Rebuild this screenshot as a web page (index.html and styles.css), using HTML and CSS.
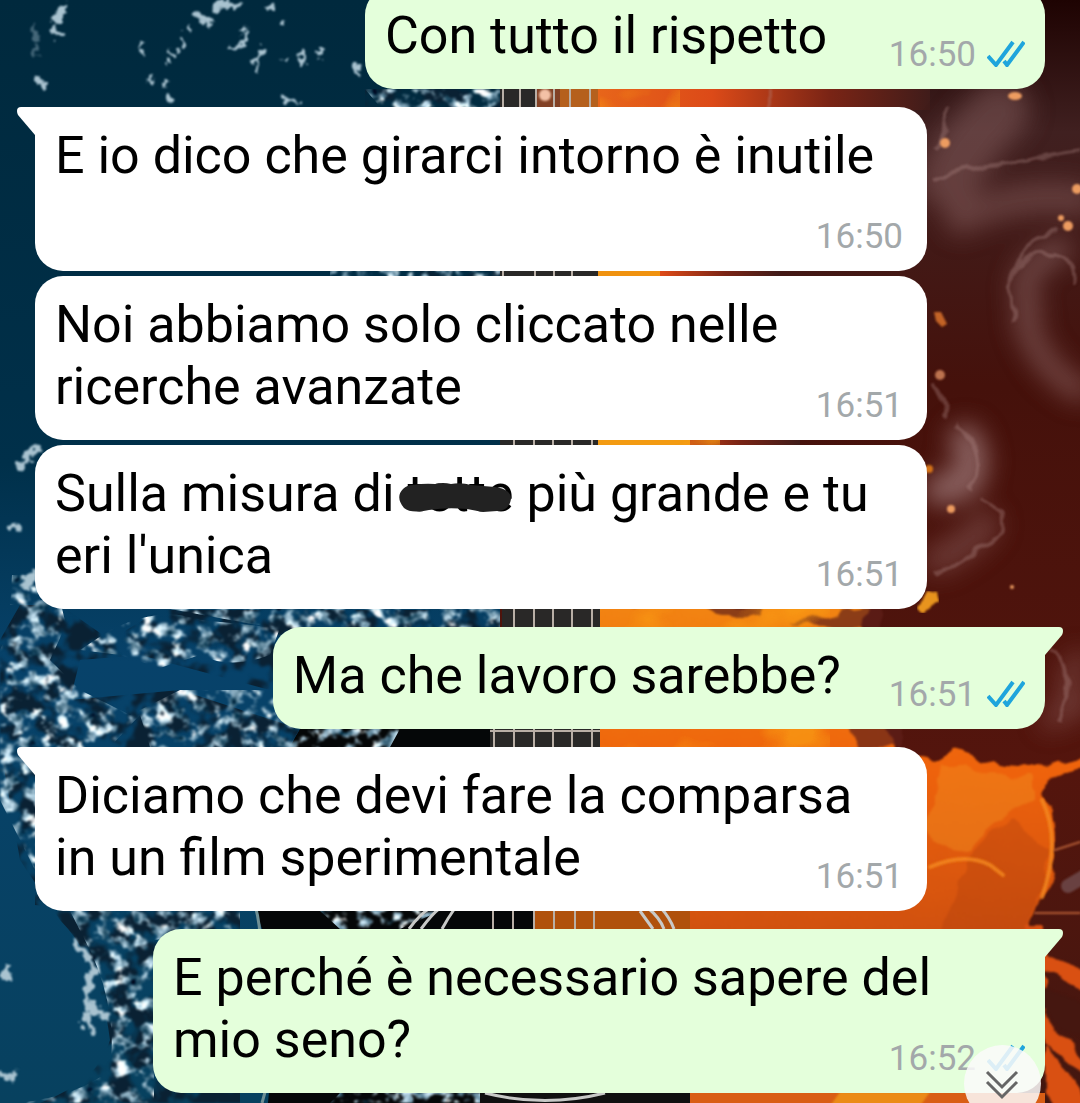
FILE: index.html
```html
<!DOCTYPE html>
<html lang="it">
<head>
    <meta charset="UTF-8">
    <meta name="viewport" content="width=device-width, initial-scale=1">
    <title>Chat</title>
    <link rel="stylesheet" href="styles.css">
</head>
<body>
    <!-- wallpaper: water and fire guitar -->
    <svg class="wallpaper" viewBox="0 0 1080 1103" preserveAspectRatio="xMidYMid slice" aria-hidden="true">
        <defs>
            <linearGradient id="water" x1="0" y1="0" x2="0" y2="1">
                <stop offset="0" stop-color="#00293d"/>
                <stop offset=".42" stop-color="#00304a"/>
                <stop offset=".6" stop-color="#07426a"/>
                <stop offset="1" stop-color="#07415f"/>
            </linearGradient>
            <linearGradient id="ember" x1="0" y1="0" x2="0" y2="1">
                <stop offset="0" stop-color="#1e0302"/>
                <stop offset=".12" stop-color="#402020"/>
                <stop offset=".35" stop-color="#45110b"/>
                <stop offset=".7" stop-color="#54150d"/>
                <stop offset="1" stop-color="#431710"/>
            </linearGradient>
            <linearGradient id="flame" x1="0" y1="0" x2="0" y2="1">
                <stop offset="0" stop-color="#f28412"/>
                <stop offset=".5" stop-color="#ee620c"/>
                <stop offset="1" stop-color="#cf500f"/>
            </linearGradient>
            <linearGradient id="glow" x1="0" y1="0" x2="1" y2="0">
                <stop offset="0" stop-color="#e8661a"/>
                <stop offset=".35" stop-color="#dc4a18"/>
                <stop offset=".7" stop-color="#7a2415"/>
                <stop offset="1" stop-color="#401c1a"/>
            </linearGradient>
            <filter id="foam" x="0" y="0" width="100%" height="100%" color-interpolation-filters="sRGB">
                <feTurbulence type="fractalNoise" baseFrequency=".07 .08" numOctaves="3" seed="7" result="fine"/>
                <feColorMatrix in="fine" values="0 2.2 0 0 -.5  0 2 0 0 -.27  0 1.9 0 0 -.15  7 0 0 0 -3.4"/>
                <feGaussianBlur stdDeviation=".8"/>
                <feComposite in2="SourceGraphic" operator="in"/>
            </filter>
            <filter id="shade" x="0" y="0" width="100%" height="100%" color-interpolation-filters="sRGB">
                <feTurbulence type="fractalNoise" baseFrequency=".045" numOctaves="3" seed="21"/>
                <feColorMatrix values="0 0 0 0 .04  0 0 0 0 .13  0 0 0 0 .2  6 0 0 0 -2.6"/>
                <feGaussianBlur stdDeviation="1"/>
                <feComposite in2="SourceGraphic" operator="in"/>
            </filter>
            <filter id="heat" x="0" y="0" width="100%" height="100%" color-interpolation-filters="sRGB">
                <feTurbulence type="fractalNoise" baseFrequency=".012 .02" numOctaves="3" seed="4"/>
                <feColorMatrix values="0 0 0 0 .98  0 0 0 0 .62  0 0 0 0 .08  4 0 0 0 -1.9"/>
                <feComposite in2="SourceGraphic" operator="in"/>
            </filter>
            <filter id="drops" color-interpolation-filters="sRGB">
                <feTurbulence type="fractalNoise" baseFrequency=".12" numOctaves="2" seed="3"/>
                <feDisplacementMap in="SourceGraphic" scale="18" xChannelSelector="R" yChannelSelector="G"/>
                <feGaussianBlur stdDeviation="1.1"/>
            </filter>
            <filter id="rough" x="-5%" y="-5%" width="110%" height="110%" color-interpolation-filters="sRGB">
                <feTurbulence type="fractalNoise" baseFrequency=".04" numOctaves="2" seed="9"/>
                <feDisplacementMap in="SourceGraphic" scale="16" xChannelSelector="R" yChannelSelector="G"/>
                <feGaussianBlur stdDeviation=".8"/>
            </filter>
            <filter id="soft" x="-20%" y="-20%" width="140%" height="140%"><feGaussianBlur stdDeviation="12"/></filter>
            <filter id="edge"><feGaussianBlur stdDeviation="1"/></filter>
        </defs>

        <rect width="520" height="1103" fill="url(#water)"/>
        <rect x="500" width="580" height="1103" fill="url(#ember)"/>

        <!-- guitar body, left half -->
        <path fill="#050708" d="M520 729H300C280 760 272 800 266 850Q250 880 256 911L262 929C272 990 274 1050 268 1103H600V729z"/>
        <path fill="none" stroke="#6f9095" stroke-width="3" d="M255 905Q262 930 260 960M267 1085L262 1103"/>

        <!-- splashes -->
        <g filter="url(#shade)">
            <path d="M20 605H60L110 640L160 610H500V629H300L270 690L140 655L80 660L70 700L180 690L300 729L280 760H0V640zM0 745H35V905L90 911H240V1103H40Q100 1080 110 1040Q100 960 60 920L20 860z"/>
            <path d="M365 89H502V107H365zM420 271H502V276H420z"/>
        </g>
        <g filter="url(#foam)">
            <path d="M22 600H60L66 625L50 660L80 690L130 715L180 690L275 690L300 729H400L390 747H150L140 715L110 747H0V650z"/>
            <path d="M110 630Q160 605 200 620L280 628L270 655Q230 670 200 655L160 668L120 655L80 650z"/>
            <path d="M170 609H500V629H280z"/>
            <path d="M0 745H35V870L20 840L0 800zM70 911H240V929L154 940V1103H20Q80 1095 110 1070Q118 1010 90 950z"/>
            <path d="M365 89H502V107H380zM330 271H502V276H330zM12 575H40V605H10z"/>
            <path d="M320 911H440L400 929H340zM340 1093H480V1103H330z"/>
        </g>
        <g fill="none" stroke="#a9c3d0" stroke-linecap="round" filter="url(#drops)">
            <path stroke-width="7" d="M76 944Q97 959 92 979Q82 999 92 1009L107 1016M87 1014Q84 1024 92 1030"/>
            <path stroke-width="7" d="M2 1074Q10 1080 16 1072M4 977Q10 972 8 967M25 457L32 454L38 450M20 465L24 463M22 578L28 584L34 576"/>
            <path stroke-width="7" d="M64 4L57 20M55 30L60 36M197 14L209 24M216 8L226 4M40 80L43 84"/>
            <path stroke-width="5" d="M142 42L140 49M187 28L190 30M183 43L181 45M170 52L176 55M166 62L167 63M151 78L153 82M164 82L166 82M168 97L172 100M246 32L243 42L234 48M264 49L256 62L259 69M287 57L286 61M302 55L303 64M316 54L323 51M286 98L294 101M357 63L359 76M267 8L273 8M236 4L230 7M281 22L283 23M13 527L17 527"/>
            <path stroke-width="5" opacity=".4" d="M35 28L36 40M34 48L36 56"/>
        </g>

        <!-- fire -->
        <path fill="url(#glow)" d="M595 85H930V110H595z"/>
        <path fill="url(#glow)" d="M598 268H780V278H598z"/>
        <path fill="#f0920f" d="M598 271H660V276H598z"/>
        <path fill="url(#glow)" d="M598 436H800V450H598z"/>
        <path fill="#f39b12" d="M598 436H690V450H598z"/>
        <g filter="url(#rough)">
            <path fill="url(#flame)" d="M590 605H868L860 627L884 729L895 754H915L930 764L955 750Q985 764 1030 769L1085 757V768Q1050 772 1040 792L1052 812Q1060 860 1047 895Q1032 920 1024 940H590z"/>
            <path fill="#f08c20" opacity=".45" d="M940 765Q990 775 1035 775L1035 800Q990 820 970 850Q940 850 925 830z"/>
            <path fill="#a93b0c" opacity=".3" d="M1010 820Q960 850 960 890Q950 920 935 935H1020Q1050 900 1050 850z"/>
            <path fill="#5f2019" opacity=".7" d="M700 600H760V616H720zM790 624L880 605V632zM850 725H900V748H860z"/>
            <path fill="#d95012" d="M1043 925H1024L1045 960V1095L1065 1110H1085V1095L1043 1040zM1043 950L1085 975V990L1043 968zM1043 1015L1085 1060V1072L1043 1040z"/>
            <path fill="#451710" d="M1038 985L1090 1005V1050L1040 1010z"/>
        </g>
        <g filter="url(#heat)" opacity=".7">
            <path d="M600 440H720V460H600zM600 607H830V628H600zM600 728H830V747H600zM600 90H680V107H600z"/>
        </g>
        <path fill="#e8941e" filter="url(#rough)" d="M918 606L926 592L936 594L938 602L926 612z"/>
        <g filter="url(#edge)" fill="none" stroke-linecap="round">
            <path stroke="#f58b1f" stroke-width="4" opacity=".8" d="M930 867Q965 852 990 865L1003 875M1042 800Q1062 840 1042 897"/>
            <path stroke="#b05a35" stroke-width="2" d="M1035 913H1080M1055 850L1080 842"/>
            <path stroke="#755457" stroke-width="14" opacity=".7" d="M1068 886L1085 876"/>
        </g>
        <path fill="#d95e15" d="M690 1093H1045V1103H690z"/>
        <path fill="#eb8b14" filter="url(#edge)" d="M840 1092H930L920 1106H830z"/>

        <!-- smoke and sparks -->
        <g fill="none" stroke="#9a7474" stroke-linecap="round" filter="url(#soft)">
            <path stroke-width="60" opacity=".4" d="M1000 110Q960 150 950 180"/>
            <path stroke-width="24" opacity=".5" d="M1030 310Q1010 270 1060 250M1025 320Q1040 370 1080 390"/>
            <path stroke-width="32" opacity=".8" d="M940 490L966 482Q978 460 965 440"/>
            <path stroke-width="30" opacity=".4" d="M938 560Q970 545 985 525M1080 200Q1020 190 960 220"/>
            <path stroke-width="20" opacity=".4" d="M1080 660Q1060 680 1075 710M1050 720L1080 700"/>
        </g>
        <g fill="none" stroke="#b08a87" stroke-width="4" opacity=".35" filter="url(#rough)">
            <path d="M1015 320Q1000 250 1052 255Q1078 262 1074 284M932 380Q950 395 944 420M955 425Q990 450 972 490M980 497Q1020 520 990 540L935 575M1055 230Q1020 240 1015 275M935 150L950 110M930 180Q960 170 1080 150"/>
            <path d="M768 85V110M1050 650Q1080 660 1060 720"/>
        </g>
        <g fill="#ed9c61" filter="url(#edge)">
            <circle cx="945" cy="143" r="5"/>
            <ellipse cx="1015" cy="96" rx="7" ry="4"/>
            <circle cx="1077" cy="189" r="5"/>
            <circle cx="1068" cy="226" r="5"/>
            <circle cx="1061" cy="218" r="3"/>
            <path fill="#c36425" d="M934 312L941 312L947 324L942 327L936 321z"/>
            <circle cx="940" cy="375" r="5" fill="#bd7350"/>
            <circle cx="951" cy="509" r="4"/>
            <circle cx="1012" cy="587" r="2"/>
            <circle cx="929" cy="469" r="4" fill="#d67316"/>
        </g>

        <!-- neck, frets and strings -->
        <path fill="#292827" d="M500 85H536V112H500zM500 268H598V449H500zM502 600H600V640H502zM490 729H600V750H490z"/>
        <path fill="#824125" d="M536 85H560V112H536z"/>
        <path fill="#b5601d" d="M560 85H598V112H560z"/>
        <path fill="#050708" d="M480 905H535V935H480z"/>
        <path fill="#b0510c" d="M535 911H690V929H535z"/>
        <path stroke="#b9afa6" stroke-width="2" d="M503 89V107M520 89V107M536 89V107M554 89V107M570 89V107M590 89V107M503 271V276M535 271V276M554 271V276M572 271V276M514 440V729M534 440V729M553 440V729M572 440V729M592 440V729M494 729V747M514 729V747M534 729V747M553 729V747M572 729V747M592 729V747M490 731H600M493 911V1103M513 911V1103M534 911V1103M554 911V1103M575 911V1103M594 911V1103"/>
        <circle cx="545" cy="95" r="6" fill="#f3c1a6" filter="url(#edge)"/>
        <path fill="#101010" d="M480 1093H690V1103H480z"/>
        <path fill="none" stroke="#c8c9c7" stroke-width="3" d="M409 929Q420 914 430 908M421 929Q432 914 440 908M442 929Q448 918 455 908M640 911L653 929M648 908Q660 918 664 929M661 908Q670 918 674 929M485 1093Q545 1108 605 1093"/>
    </svg>

    <main class="chat">
        <div class="msg sent">Con tutto il rispetto <span class="meta"><time>16:50</time><svg class="ticks" viewBox="0 0 38 27" role="img" aria-label="Letto"><path d="M1 16L9 25L26 2M17 21L20 25L37 2"/></svg></span></div>

        <div class="msg received first">E io dico che girarci intorno è inutile <span class="meta"><time>16:50</time></span></div>
        <div class="msg received">Noi abbiamo solo cliccato nelle ricerche avanzate <span class="meta"><time>16:51</time></span></div>
        <div class="msg received">Sulla misura di <span class="redacted">tette<svg class="scribble" viewBox="0 0 114 30" aria-hidden="true"><path d="M14 2Q26 0 36 1Q44 -1 52 1Q62 -1 72 2L96 4Q112 6 112 16Q110 28 98 28L84 29L68 26Q48 24 30 27Q12 31 5 25Q-4 14 4 6Q8 2 14 2z"/></svg></span> più grande e tu eri l'unica <span class="meta"><time>16:51</time></span></div>

        <div class="msg sent first">Ma che lavoro sarebbe? <span class="meta"><time>16:51</time><svg class="ticks" viewBox="0 0 38 27" role="img" aria-label="Letto"><path d="M1 16L9 25L26 2M17 21L20 25L37 2"/></svg></span></div>

        <div class="msg received first">Diciamo che devi fare la comparsa in&nbsp;un film sperimentale <span class="meta"><time>16:51</time></span></div>

        <div class="msg sent first">E perché è necessario sapere del mio seno? <span class="meta"><time>16:52</time><svg class="ticks" viewBox="0 0 38 27" role="img" aria-label="Letto"><path d="M1 16L9 25L26 2M17 21L20 25L37 2"/></svg></span></div>
    </main>

    <button class="scroll-down" type="button" aria-label="Vai in fondo">
        <svg viewBox="0 0 77 77"><path d="M23 27L38 42L53 27M23 37L38 52L53 37"/></svg>
    </button>
</body>
</html>
```
FILE: styles.css
```css
* { box-sizing: border-box; }
body {
    margin: 0;
    height: 100vh;
    overflow: hidden;
    position: relative;
    background: #00293d;
    color: #000;
    font-family: Roboto, sans-serif;
    font-size: 52px;
    line-height: 62px;
}
.wallpaper { position: absolute; top: 0; left: 0; width: 100%; height: 100%; }

.chat {
    position: relative;
    height: 100%;
    padding: 0 35px 10px;
    display: flex;
    flex-direction: column;
    justify-content: flex-end;
    align-items: flex-start;
    gap: 5px;
}
.msg {
    position: relative;
    flex: none;
    display: flow-root;
    min-width: 680px;
    max-width: calc(100% - 118px);
    padding: 18px 24px 22px 20px;
    border-radius: 28px;
    background: #fff;
}
.sent { align-self: flex-end; padding-right: 20px; background: #e4ffdb; }
.first { margin-top: 13px; }
.received.first { border-top-left-radius: 0; }
.sent.first { border-top-right-radius: 0; }

/* bubble tail */
.first::before {
    content: "";
    position: absolute;
    top: 0;
    left: -18px;
    width: 19px;
    height: 28px;
    background: inherit;
    clip-path: path("M19 0H4Q0 0 0 4Q0 6 1 8L18 28H19z");
}
.sent.first::before { left: auto; right: -18px; transform: scaleX(-1); }

.meta {
    float: right;
    display: flex;
    align-items: center;
    gap: 11px;
    margin: 0 0 -9px 48px;
    padding-top: 29px;
    font-size: 35px;
    line-height: 42px;
    color: #a3a8aa;
}
.ticks { width: 38px; height: 27px; margin-bottom: 4px; fill: none; stroke: #1fa5dc; stroke-width: 4; }

.redacted { position: relative; }
.scribble { position: absolute; left: -8px; top: 20px; width: 114px; height: 30px; fill: #222; overflow: visible; }

.scroll-down {
    position: absolute;
    right: 39px;
    bottom: -19px;
    width: 77px;
    height: 77px;
    padding: 0;
    border: 0;
    border-radius: 50%;
    background: rgba(251, 250, 250, .86);
}
.scroll-down svg { display: block; fill: none; stroke: #666; stroke-width: 3; }
```
